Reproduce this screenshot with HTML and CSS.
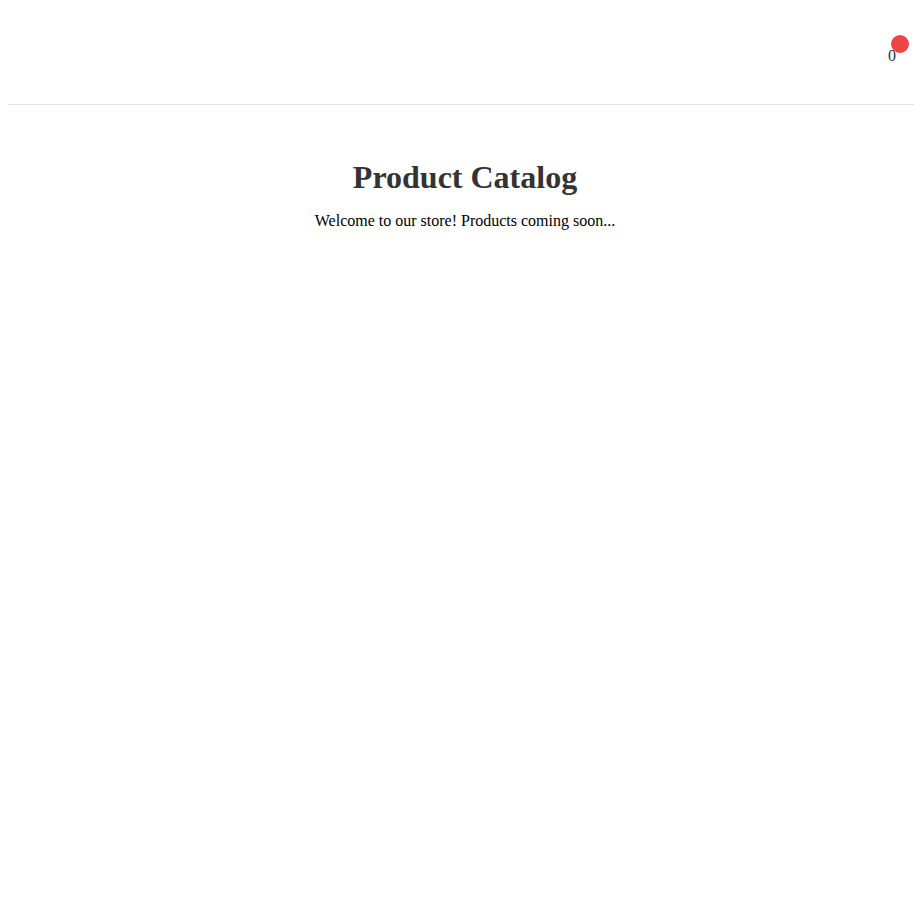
FILE: index.html
```html
<!DOCTYPE html>
<html>
<head>
<meta charset="utf-8">
<link rel="stylesheet" href="styles.css">
</head>
<body>
<header class="site-header">
  <div class="cart">
    <span class="cart-count">0</span>
    <span class="cart-dot"></span>
  </div>
</header>
<main class="catalog">
  <h1 class="catalog-title">Product Catalog</h1>
  <p class="catalog-text">Welcome to our store! Products coming soon...</p>
</main>
</body>
</html>
```
FILE: styles.css
```css
body {
  margin: 8px;
  width: 100vw;
  font-family: "Liberation Serif", "Times New Roman", serif;
  background: #fff;
  color: #000;
}
.site-header {
  height: 96px;
  display: flex;
  justify-content: flex-end;
  align-items: center;
  border-bottom: 1px solid #e5e5e5;
}
.cart {
  position: relative;
  margin-right: 26px;
  font-size: 16px;
  color: #333;
}
.cart-dot {
  position: absolute;
  top: -12px;
  left: 3px;
  width: 18px;
  height: 18px;
  border-radius: 50%;
  background: #ef4444;
}
.catalog {
  text-align: center;
  padding-top: 33px;
}
.catalog-title {
  font-size: 32px;
  font-weight: bold;
  color: #333;
  margin: 21px 0 16px;
}
.catalog-text {
  font-size: 16px;
  margin: 0;
}
```
